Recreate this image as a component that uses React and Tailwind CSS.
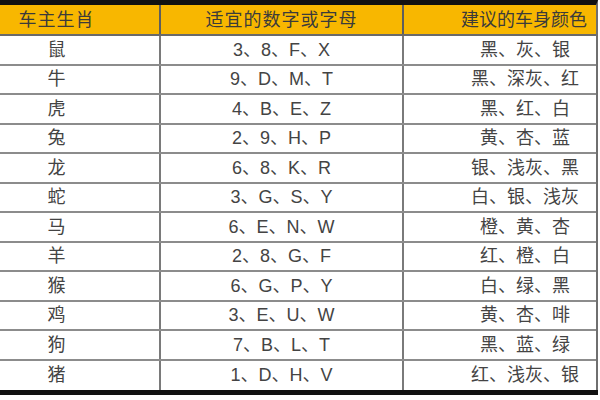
const rows = [
  ["鼠", "3、8、F、X", "黑、灰、银"],
  ["牛", "9、D、M、T", "黑、深灰、红"],
  ["虎", "4、B、E、Z", "黑、红、白"],
  ["兔", "2、9、H、P", "黄、杏、蓝"],
  ["龙", "6、8、K、R", "银、浅灰、黑"],
  ["蛇", "3、G、S、Y", "白、银、浅灰"],
  ["马", "6、E、N、W", "橙、黄、杏"],
  ["羊", "2、8、G、F", "红、橙、白"],
  ["猴", "6、G、P、Y", "白、绿、黑"],
  ["鸡", "3、E、U、W", "黄、杏、啡"],
  ["狗", "7、B、L、T", "黑、蓝、绿"],
  ["猪", "1、D、H、V", "红、浅灰、银"],
];

export default function App() {
  return (
    <div
      className="w-[600px] h-[400px] bg-white overflow-hidden"
      style={{ fontFamily: '"Liberation Sans", "Noto Sans CJK SC", sans-serif' }}
    >
      {/* table */}
      <div className="w-[598px] border-t-[5px] border-[#111] border-r-2 border-r-[#6f6f6f]">
        {/* header */}
        <div className="grid grid-cols-[161px_243px_192px] h-[31px] bg-[#f8b700] border-b-2 border-[#6a6a6a] text-[18px] leading-none text-[#3b3b3b] whitespace-nowrap">
          <div className="flex items-center justify-center pr-[46px] border-r-2 border-[#5e5e5e] tracking-[1px]">
            车主生肖
          </div>
          <div className="flex items-center justify-center border-r-2 border-[#5e5e5e] tracking-[1px]">
            适宜的数字或字母
          </div>
          <div className="flex items-center justify-center pl-[48px]">
            建议的车身颜色
          </div>
        </div>

        {/* body */}
        {rows.map((r, i) => (
          <div
            key={i}
            className={`grid grid-cols-[161px_243px_192px] h-[29.5px] text-[18px] leading-none text-[#444] whitespace-nowrap ${
              i < rows.length - 1 ? "border-b-2 border-[#8c8c8c]" : ""
            }`}
          >
            <div className="flex items-center justify-center pr-[46px] border-r-2 border-[#7a7a7a]">
              {r[0]}
            </div>
            <div className="flex items-center justify-center border-r-2 border-[#7a7a7a]">
              {r[1]}
            </div>
            <div className="flex items-center justify-center pl-[50px]">
              {r[2]}
            </div>
          </div>
        ))}
      </div>
      {/* bottom rule */}
      <div className="w-[598px] h-[5px] bg-[#111]" />
    </div>
  );
}
